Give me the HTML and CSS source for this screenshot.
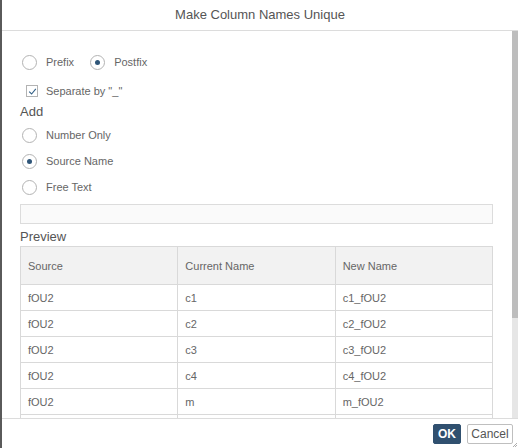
FILE: index.html
```html
<!DOCTYPE html>
<html>
<head>
<meta charset="utf-8">
<link rel="stylesheet" href="styles.css">
</head>
<body>
<div class="dialog">
  <div class="header">Make Column Names Unique</div>
  <div class="body-wrap">
    <div class="content">
      <div class="radio-row">
        <label class="option"><span class="radio"></span><span class="opt-text">Prefix</span></label>
        <label class="option"><span class="radio checked"></span><span class="opt-text">Postfix</span></label>
      </div>
      <div class="check-row">
        <span class="checkbox"><svg width="9" height="9" viewBox="0 0 9 9"><path d="M1.2 4.6 L3.6 7 L7.8 1.8" fill="none" stroke="#346187" stroke-width="1.1"/></svg></span>
        <span class="opt-text">Separate by "_"</span>
      </div>
      <div class="section-label">Add</div>
      <div class="radio-list">
        <label class="option list-item"><span class="radio"></span><span class="opt-text">Number Only</span></label>
        <label class="option list-item"><span class="radio checked"></span><span class="opt-text">Source Name</span></label>
        <label class="option list-item"><span class="radio"></span><span class="opt-text">Free Text</span></label>
      </div>
      <div class="text-input"></div>
      <div class="section-label preview-label">Preview</div>
      <table class="preview">
        <thead>
          <tr><th>Source</th><th>Current Name</th><th>New Name</th></tr>
        </thead>
        <tbody>
          <tr><td>fOU2</td><td>c1</td><td>c1_fOU2</td></tr>
          <tr><td>fOU2</td><td>c2</td><td>c2_fOU2</td></tr>
          <tr><td>fOU2</td><td>c3</td><td>c3_fOU2</td></tr>
          <tr><td>fOU2</td><td>c4</td><td>c4_fOU2</td></tr>
          <tr><td>fOU2</td><td>m</td><td>m_fOU2</td></tr>
          <tr><td></td><td></td><td></td></tr>
        </tbody>
      </table>
    </div>
    <div class="scrollbar"><div class="thumb"></div></div>
  </div>
  <div class="footer">
    <button class="btn btn-primary">OK</button>
    <button class="btn btn-default">Cancel</button>
    <svg class="grip" width="4" height="4" viewBox="0 0 4 4"><path d="M0 4 L4 0 M2 4 L4 2" stroke="#999" stroke-width="0.8"/></svg>
  </div>
</div>
</body>
</html>
```
FILE: styles.css
```css
* { box-sizing: border-box; }
html, body { margin: 0; padding: 0; }
body {
  width: 518px;
  height: 448px;
  overflow: hidden;
  background: #fff;
  font-family: "Liberation Sans", Arial, sans-serif;
  color: #666;
}
.dialog {
  width: 518px;
  height: 448px;
  border-left: 2px solid #5a5a5a;
  display: flex;
  flex-direction: column;
  background: #fff;
  position: relative;
}
.header {
  height: 31px;
  flex: none;
  border-bottom: 1px solid #dcdcdc;
  text-align: center;
  line-height: 30px;
  font-size: 13px;
  color: #555;
}
.body-wrap {
  flex: 1;
  min-height: 0;
  display: flex;
}
.content {
  flex: 1;
  min-width: 0;
  overflow: hidden;
  padding: 18px 19px 0 18px;
}
.scrollbar {
  width: 6px;
  flex: none;
  background: #e6e6e6;
}
.thumb {
  height: 287px;
  background: #bdbdbd;
}
.radio-row {
  height: 26px;
  display: flex;
  align-items: center;
}
.option {
  display: flex;
  align-items: center;
  font-size: 11px;
  color: #666;
}
.radio-row .option { margin-right: 14px; }
.radio {
  width: 15px;
  height: 15px;
  border: 1px solid #b3b3b3;
  border-radius: 50%;
  margin-left: 2px;
  margin-right: 9px;
  display: flex;
  align-items: center;
  justify-content: center;
  background: #fff;
}
.radio.checked::after {
  content: "";
  width: 5px;
  height: 5px;
  border-radius: 50%;
  background: #2f5679;
}
.check-row {
  height: 26px;
  margin-top: 3px;
  display: flex;
  align-items: center;
  font-size: 11px;
}
.checkbox {
  width: 12px;
  height: 12px;
  border: 1px solid #b3b3b3;
  margin-left: 6px;
  margin-right: 8px;
  display: flex;
  align-items: center;
  justify-content: center;
}
.checkbox svg { display: block; }
.section-label {
  font-size: 13px;
  line-height: 16px;
  height: 16px;
  color: #555;
}
.radio-list { margin-top: 2px; }
.list-item { height: 26px; }
.text-input {
  margin-top: 4px;
  height: 20px;
  border: 1px solid #dcdcdc;
  background: #fafafa;
  width: 473px;
}
.preview-label { margin-top: 5px; }
.preview {
  margin-top: 1px;
  width: 473px;
  border-collapse: collapse;
  table-layout: fixed;
  font-size: 11px;
  color: #666;
}
.preview th, .preview td {
  border: 1px solid #d9d9d9;
  text-align: left;
  font-weight: normal;
  padding: 0 7px;
}
.preview th {
  height: 38px;
  background: #f2f2f2;
}
.preview td { height: 26px; }
.footer {
  height: 30px;
  flex: none;
  border-top: 1px solid #dcdcdc;
  display: flex;
  align-items: center;
  justify-content: flex-end;
  gap: 6px;
  padding-right: 5px;
}
.btn {
  height: 20px;
  font-family: "Liberation Sans", Arial, sans-serif;
  font-size: 12px;
  border-radius: 2px;
  margin: 0;
  margin-top: 1px;
}
.btn-primary {
  background: #30506f;
  border: 1px solid #30506f;
  color: #fff;
  font-weight: bold;
  width: 28px;
  padding: 0;
}
.btn-default {
  background: #fff;
  border: 1px solid #bfbfbf;
  color: #555;
  width: 46px;
  padding: 0;
}
.grip {
  position: absolute;
  right: 1px;
  bottom: 1px;
}
```
